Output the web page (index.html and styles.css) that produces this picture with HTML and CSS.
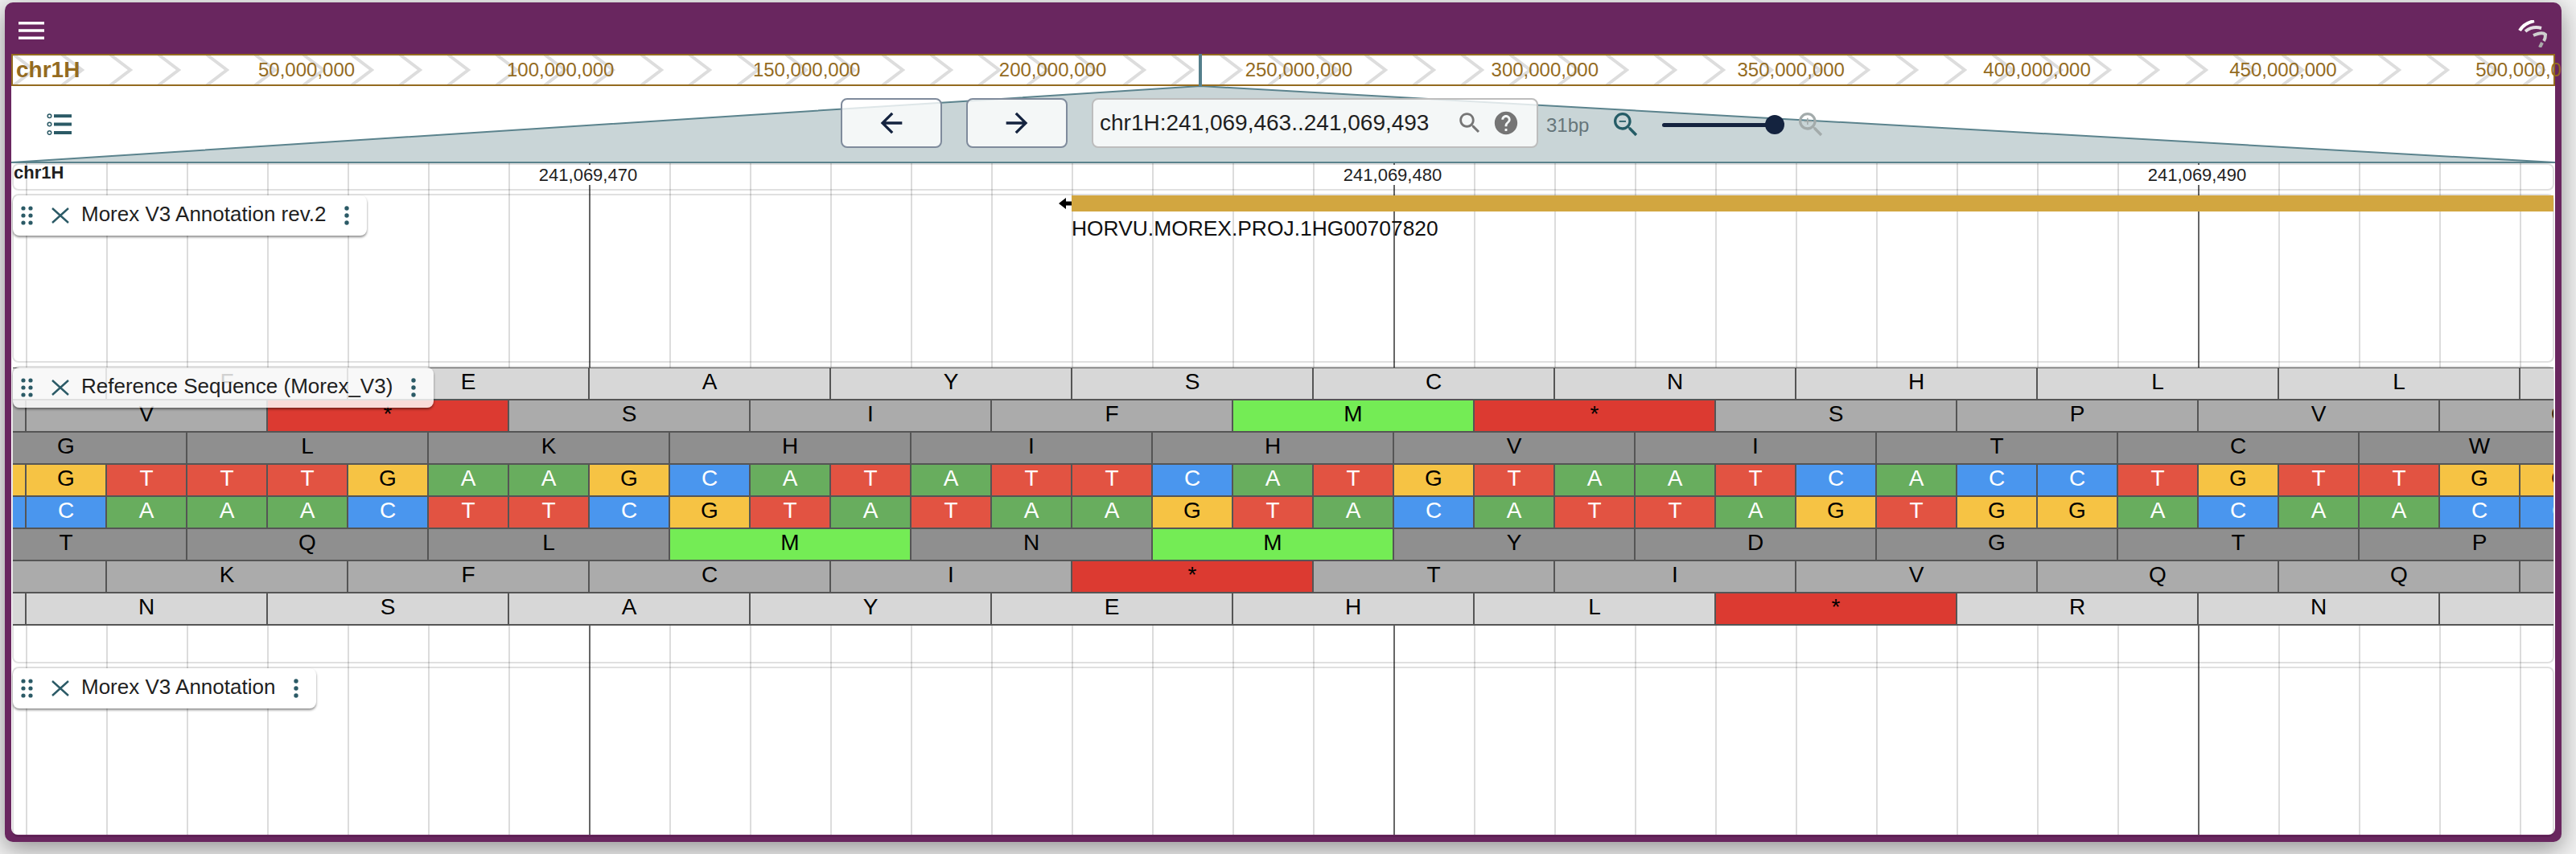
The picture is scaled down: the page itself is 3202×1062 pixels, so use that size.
FILE: index.html
```html
<!DOCTYPE html>
<html lang="en">

<head>
    <meta charset="UTF-8">
    <title>JBrowse - Morex V3</title>
    <link rel="stylesheet" href="styles.css">
</head>

<body>

    <div class="window">
        <div class="topbar">
            <svg class="menu-icon" width="32" height="22" viewBox="0 0 32 22"><path d="M0 0h32v3.4H0zM0 9.300h32v3.400H0zM0 18.600h32V22H0z" /></svg>
            <svg class="logo" width="36" height="34" viewBox="0 0 36 34" fill="none" stroke-linecap="butt">
                <path d="M2 13Q7 4 20 1" stroke="#fff" stroke-width="4" />
                <path d="M9 14Q18 7 29 10" stroke="#e4dfe4" stroke-width="4" />
                <path d="M19 19Q30 14 34 18Q34 23 32 26" stroke="#cfcfcf" stroke-width="4" />
                <path d="M27 34L30 28" stroke="#aaa" stroke-width="4" />
            </svg>
        </div>

        <div class="content">
            <!-- overview -->
            <div class="overview">
                <svg class="chevrons" width="3158" height="36">
                    <defs>
                        <pattern id="chev" width="60" height="36" x="59" patternUnits="userSpaceOnUse">
                            <path d="M2 -1L27 18L2 37" fill="none" stroke="#ddd" stroke-width="4" />
                        </pattern>
                    </defs>
                    <rect width="3158" height="36" fill="url(#chev)" />
                </svg>
                <span class="ov-name">chr1H</span>
                <span class="ov-tick ov-first">50,000,000</span>
                <span class="ov-tick">100,000,000</span>
                <span class="ov-tick">150,000,000</span>
                <span class="ov-tick">200,000,000</span>
                <span class="ov-tick">250,000,000</span>
                <span class="ov-tick">300,000,000</span>
                <span class="ov-tick">350,000,000</span>
                <span class="ov-tick">400,000,000</span>
                <span class="ov-tick">450,000,000</span>
                <span class="ov-tick">500,000,000</span>
                <div class="ov-marker"></div>
            </div>

            <!-- toolbar -->
            <div class="toolbar">
                <svg class="zoom-shape" width="3162" height="96" viewBox="0 0 3162 96">
                    <polygon points="0,95 1478,0 3162,95" fill="#c9d5d7" stroke="#5b838d" stroke-width="2" />
                </svg>
                <svg class="list-icon" width="31" height="27" viewBox="0 0 31 27" fill="#2b5a66">
                    <circle cx="3.500" cy="3.200" r="2.300" fill="none" stroke="#2b5a66" stroke-width="1.500" />
                    <circle cx="3.500" cy="13.500" r="2.300" fill="none" stroke="#2b5a66" stroke-width="1.500" />
                    <circle cx="3.500" cy="24" r="2.300" fill="none" stroke="#2b5a66" stroke-width="1.500" />
                    <rect x="9" y="1.200" width="22" height="4" />
                    <rect x="9" y="11.500" width="22" height="4" />
                    <rect x="9" y="22" width="22" height="4" />
                </svg>
                <div class="nav-btn nav-first">
                    <svg width="40" height="40" viewBox="0 0 24 24"><path d="M20 11H7.830l5.590-5.590L12 4l-8 8 8 8 1.410-1.410L7.830 13H20v-2z" /></svg>
                </div>
                <div class="nav-btn">
                    <svg width="40" height="40" viewBox="0 0 24 24"><path d="M12 4l-1.410 1.410L16.170 11H4v2h12.170l-5.580 5.590L12 20l8-8z" /></svg>
                </div>
                <div class="search-box">
                    <span class="search-text">chr1H:241,069,463..241,069,493</span>
                    <svg class="search-icon" width="34" height="34" viewBox="0 0 24 24"><path d="M15.500 14h-.79l-.28-.27C15.410 12.590 16 11.110 16 9.500 16 5.910 13.090 3 9.500 3S3 5.910 3 9.500 5.910 16 9.500 16c1.610 0 3.090-.59 4.230-1.570l.27.28v.79l5 4.990L20.490 19l-4.990-5zm-6 0C7.010 14 5 11.990 5 9.500S7.010 5 9.500 5 14 7.010 14 9.500 11.990 14 9.500 14z" /></svg>
                    <svg class="help-icon" width="34" height="34" viewBox="0 0 24 24"><path d="M12 2C6.480 2 2 6.480 2 12s4.480 10 10 10 10-4.480 10-10S17.520 2 12 2zm1 17h-2v-2h2v2zm2.070-7.750l-.9.920C13.450 12.900 13 13.500 13 15h-2v-.5c0-1.100.45-2.100 1.170-2.830l1.240-1.260c.37-.36.59-.86.59-1.410 0-1.100-.9-2-2-2s-2 .9-2 2H8c0-2.210 1.790-4 4-4s4 1.790 4 4c0 .88-.36 1.680-.93 2.250z" /></svg>
                </div>
                <span class="bp-label">31bp</span>
                <svg class="zoom-out" width="40" height="40" viewBox="0 0 24 24"><path d="M15.500 14h-.79l-.28-.27C15.410 12.590 16 11.110 16 9.500 16 5.910 13.090 3 9.500 3S3 5.910 3 9.500 5.910 16 9.500 16c1.610 0 3.090-.59 4.230-1.570l.27.28v.79l5 4.990L20.490 19l-4.990-5zm-6 0C7.010 14 5 11.990 5 9.500S7.010 5 9.500 5 14 7.010 14 9.500 11.990 14 9.500 14zM7 9h5v1H7z" /></svg>
                <div class="slider"><div class="slider-line"></div><div class="slider-thumb"></div></div>
                <svg class="zoom-in" width="40" height="40" viewBox="0 0 24 24"><path d="M15.500 14h-.79l-.28-.27C15.410 12.590 16 11.110 16 9.500 16 5.910 13.090 3 9.500 3S3 5.910 3 9.500 5.910 16 9.500 16c1.610 0 3.090-.59 4.230-1.570l.27.28v.79l5 4.990L20.490 19l-4.990-5zm-6 0C7.010 14 5 11.990 5 9.500S7.010 5 9.500 5 14 7.010 14 9.500 11.990 14 9.500 14z" /><path d="M12 10h-2v2H9v-2H7V9h2V7h1v2h3v1z" /></svg>
            </div>

            <!-- tracks -->
            <div class="tracks">
                <div class="scalebar">
                    <div class="scale-name">chr1H</div>
                    <div class="scale-cell"><span>241,069,470</span></div>
                    <div class="scale-cell"><span>241,069,480</span></div>
                    <div class="scale-cell"><span>241,069,490</span></div>
                </div>

                <div class="track track-gene">
                    <div class="pill">
                        <svg class="drag" width="24" height="28" viewBox="0 0 24 28"><circle cx="8" cy="5" r="2.600" /><circle cx="17" cy="5" r="2.600" /><circle cx="8" cy="14" r="2.600" /><circle cx="17" cy="14" r="2.600" /><circle cx="8" cy="23" r="2.600" /><circle cx="17" cy="23" r="2.600" /></svg>
                        <svg class="close" width="24" height="24" viewBox="0 0 24 24"><path d="M2 3L22 21M22 3L2 21" /></svg>
                        <span class="pill-title">Morex V3 Annotation rev.2</span>
                        <svg class="kebab" width="24" height="28" viewBox="0 0 24 28"><circle cx="12" cy="5" r="2.700" /><circle cx="12" cy="14" r="2.700" /><circle cx="12" cy="23" r="2.700" /></svg>
                    </div>
                    <div class="gene">
                        <svg class="gene-arrow" width="16" height="14" viewBox="0 0 16 14"><path d="M0 7L9 0V4.500H16V9.500H9V14z" /></svg>
                        <div class="gene-bar"></div>
                    </div>
                    <div class="gene-name">HORVU.MOREX.PROJ.1HG00707820</div>
                </div>

                <div class="track track-seq">
                    <div class="sequence">
                        <div class="row row-b shade-1">
                            <span class="fr"></span><span class="fr">F</span><span class="fr">E</span><span class="fr">A</span><span class="fr">Y</span><span class="fr">S</span><span class="fr">C</span><span class="fr">N</span><span class="fr">H</span><span class="fr">L</span><span class="fr">L</span><span class="fr"></span>
                        </div>
                        <div class="row row-a shade-2">
                            <span class="fr"></span><span class="fr">V</span><span class="fr stop">*</span><span class="fr">S</span><span class="fr">I</span><span class="fr">F</span><span class="fr start">M</span><span class="fr stop">*</span><span class="fr">S</span><span class="fr">P</span><span class="fr">V</span><span class="fr">G</span>
                        </div>
                        <div class="row row-c shade-3">
                            <span class="fr">G</span><span class="fr">L</span><span class="fr">K</span><span class="fr">H</span><span class="fr">I</span><span class="fr">H</span><span class="fr">V</span><span class="fr">I</span><span class="fr">T</span><span class="fr">C</span><span class="fr">W</span>
                        </div>
                        <div class="row row-c">
                            <span class="bs g">G</span><span class="bs g">G</span><span class="bs t">T</span><span class="bs t">T</span><span class="bs t">T</span><span class="bs g">G</span><span class="bs a">A</span><span class="bs a">A</span><span class="bs g">G</span><span class="bs c">C</span><span class="bs a">A</span><span class="bs t">T</span><span class="bs a">A</span><span class="bs t">T</span><span class="bs t">T</span><span class="bs c">C</span><span class="bs a">A</span><span class="bs t">T</span><span class="bs g">G</span><span class="bs t">T</span><span class="bs a">A</span><span class="bs a">A</span><span class="bs t">T</span><span class="bs c">C</span><span class="bs a">A</span><span class="bs c">C</span><span class="bs c">C</span><span class="bs t">T</span><span class="bs g">G</span><span class="bs t">T</span><span class="bs t">T</span><span class="bs g">G</span><span class="bs g">G</span>
                        </div>
                        <div class="row row-c">
                            <span class="bs c">C</span><span class="bs c">C</span><span class="bs a">A</span><span class="bs a">A</span><span class="bs a">A</span><span class="bs c">C</span><span class="bs t">T</span><span class="bs t">T</span><span class="bs c">C</span><span class="bs g">G</span><span class="bs t">T</span><span class="bs a">A</span><span class="bs t">T</span><span class="bs a">A</span><span class="bs a">A</span><span class="bs g">G</span><span class="bs t">T</span><span class="bs a">A</span><span class="bs c">C</span><span class="bs a">A</span><span class="bs t">T</span><span class="bs t">T</span><span class="bs a">A</span><span class="bs g">G</span><span class="bs t">T</span><span class="bs g">G</span><span class="bs g">G</span><span class="bs a">A</span><span class="bs c">C</span><span class="bs a">A</span><span class="bs a">A</span><span class="bs c">C</span><span class="bs c">C</span>
                        </div>
                        <div class="row row-c shade-3">
                            <span class="fr">T</span><span class="fr">Q</span><span class="fr">L</span><span class="fr start">M</span><span class="fr">N</span><span class="fr start">M</span><span class="fr">Y</span><span class="fr">D</span><span class="fr">G</span><span class="fr">T</span><span class="fr">P</span>
                        </div>
                        <div class="row row-b shade-2">
                            <span class="fr"></span><span class="fr">K</span><span class="fr">F</span><span class="fr">C</span><span class="fr">I</span><span class="fr stop">*</span><span class="fr">T</span><span class="fr">I</span><span class="fr">V</span><span class="fr">Q</span><span class="fr">Q</span><span class="fr"></span>
                        </div>
                        <div class="row row-a shade-1">
                            <span class="fr"></span><span class="fr">N</span><span class="fr">S</span><span class="fr">A</span><span class="fr">Y</span><span class="fr">E</span><span class="fr">H</span><span class="fr">L</span><span class="fr stop">*</span><span class="fr">R</span><span class="fr">N</span><span class="fr"></span>
                        </div>
                    </div>
                    <div class="pill pill-glass">
                        <svg class="drag" width="24" height="28" viewBox="0 0 24 28"><circle cx="8" cy="5" r="2.600" /><circle cx="17" cy="5" r="2.600" /><circle cx="8" cy="14" r="2.600" /><circle cx="17" cy="14" r="2.600" /><circle cx="8" cy="23" r="2.600" /><circle cx="17" cy="23" r="2.600" /></svg>
                        <svg class="close" width="24" height="24" viewBox="0 0 24 24"><path d="M2 3L22 21M22 3L2 21" /></svg>
                        <span class="pill-title">Reference Sequence (Morex_V3)</span>
                        <svg class="kebab" width="24" height="28" viewBox="0 0 24 28"><circle cx="12" cy="5" r="2.700" /><circle cx="12" cy="14" r="2.700" /><circle cx="12" cy="23" r="2.700" /></svg>
                    </div>
                </div>

                <div class="track track-last">
                    <div class="pill">
                        <svg class="drag" width="24" height="28" viewBox="0 0 24 28"><circle cx="8" cy="5" r="2.600" /><circle cx="17" cy="5" r="2.600" /><circle cx="8" cy="14" r="2.600" /><circle cx="17" cy="14" r="2.600" /><circle cx="8" cy="23" r="2.600" /><circle cx="17" cy="23" r="2.600" /></svg>
                        <svg class="close" width="24" height="24" viewBox="0 0 24 24"><path d="M2 3L22 21M22 3L2 21" /></svg>
                        <span class="pill-title">Morex V3 Annotation</span>
                        <svg class="kebab" width="24" height="28" viewBox="0 0 24 28"><circle cx="12" cy="5" r="2.700" /><circle cx="12" cy="14" r="2.700" /><circle cx="12" cy="23" r="2.700" /></svg>
                    </div>
                </div>
            </div>
        </div>
    </div>

</body>

</html>
```

FILE: styles.css
```css
* {
    box-sizing: border-box;
}

html,
body {
    margin: 0;
    height: 1062px;
    overflow: hidden;
}

body {
    padding: 3px 0 0 6px;
    background-color: #f1f1f1;
    font-family: "Liberation Sans", Arial, sans-serif;
    color: #1f1f1f;
}

.window {
    width: 3178px;
    height: 1044px;
    background-color: #69265f;
    border-radius: 10px;
    box-shadow: 0 8px 30px rgba(0, 0, 0, 0.4);
    overflow: hidden;
}

/* top bar */
.topbar {
    height: 64px;
    display: flex;
    align-items: center;
    justify-content: space-between;
    padding: 0 18px 0 17px;
}

.menu-icon {
    fill: #fff;
    margin-top: 5px;
}

.logo {
    margin-top: 14px;
}

.content {
    width: 3162px;
    height: 971px;
    margin-left: 8px;
    background-color: #fff;
    border-radius: 0 0 8px 8px;
}

/* overview */
.overview {
    position: relative;
    height: 40px;
    display: flex;
    align-items: center;
    padding-left: 4px;
    border: 2px solid #946b1f;
    background-color: #fff;
    color: #946b1f;
    font-size: 24px;
    white-space: nowrap;
}

.chevrons {
    position: absolute;
    left: 0;
    top: 0;
}

.ov-name {
    position: relative;
    flex: 0 0 301px;
    font-size: 28px;
    font-weight: bold;
}

.ov-tick {
    position: relative;
    flex: 0 0 305.9px;
}

.ov-first {
    flex-basis: 309px;
}

.ov-marker {
    position: absolute;
    left: 1474px;
    top: -2px;
    width: 4px;
    height: 40px;
    background-color: #547f8b;
}

/* toolbar */
.toolbar {
    position: relative;
    height: 96px;
    display: flex;
    align-items: center;
    padding: 0 0 4px 44px;
}

.toolbar > * {
    position: relative;
    flex: none;
}

.toolbar > .zoom-shape {
    position: absolute;
    left: 0;
    top: 0;
}

.list-icon {
    margin-top: 3px;
}

.nav-btn {
    width: 126px;
    height: 62px;
    margin-left: 30px;
    display: flex;
    align-items: center;
    justify-content: center;
    background-color: rgba(255, 255, 255, 0.8);
    border: 2px solid #7f8b9c;
    border-radius: 8px;
    fill: #14233f;
}

.nav-first {
    margin-left: 956px;
}

.search-box {
    width: 555px;
    height: 62px;
    margin-left: 30px;
    display: flex;
    align-items: center;
    padding: 0 21px 0 8px;
    background-color: rgba(255, 255, 255, 0.8);
    border: 2px solid #bdbdbd;
    border-radius: 8px;
    font-size: 28px;
}

.search-text {
    margin-right: auto;
}

.search-icon,
.help-icon {
    fill: #757575;
}

.help-icon {
    margin-left: 11px;
}

.bp-label {
    margin: 6px 0 0 10px;
    font-size: 24px;
    color: #66757a;
}

.zoom-out {
    margin: 4px 0 0 26px;
    fill: #255c66;
}

.slider {
    width: 152px;
    height: 24px;
    margin: 4px 0 0 25px;
}

.slider-line {
    width: 140px;
    height: 5px;
    margin-top: 10px;
    background-color: #14233f;
    border-radius: 3px;
}

.slider-thumb {
    position: absolute;
    right: 0;
    top: 0;
    width: 24px;
    height: 24px;
    border-radius: 50%;
    background-color: #14233f;
}

.zoom-in {
    margin: 4px 0 0 13px;
    fill: #a3abab;
}

/* tracks, grid lines are drawn on the background */
.tracks {
    height: 835px;
    padding: 0 1px;
    display: flex;
    flex-direction: column;
    gap: 4px;
    background-image:
        linear-gradient(90deg, #666 2px, transparent 2px),
        linear-gradient(90deg, #dcdcdc 2px, transparent 2px);
    background-size: 1000px 100%, 100px 100%;
    background-position: 718px 0, 18px 0;
    border-radius: 0 0 8px 8px;
}

.scalebar,
.track {
    position: relative;
    flex: none;
    border: 2px solid rgba(0, 0, 0, 0.12);
    border-radius: 8px;
}

.scalebar {
    height: 34px;
    display: flex;
    white-space: nowrap;
}

.scale-name {
    flex: 0 0 215px;
    margin-left: -1px;
    padding-left: 1px;
    font-size: 22px;
    font-weight: bold;
    line-height: 20px;
}

.scale-cell {
    flex: 0 0 1000px;
    text-align: center;
    font-size: 22px;
    line-height: 25px;
    height: 25px;
}

.scale-cell span {
    display: inline-block;
    background-color: #fff;
}

.track-gene {
    height: 210px;
}

.track-seq {
    height: 370px;
}

.track-last {
    height: 212px;
}

/* track label */
.pill {
    position: absolute;
    left: -1px;
    top: 0;
    height: 50px;
    display: flex;
    align-items: center;
    padding: 0 13px 0 5px;
    background-color: #fff;
    border-radius: 8px;
    box-shadow: 0 2px 3px rgba(0, 0, 0, 0.45);
    font-size: 26px;
    white-space: nowrap;
}

.pill-glass {
    background-color: rgba(255, 255, 255, 0.82);
}

.drag,
.kebab {
    fill: #2b5a66;
}

.close {
    margin-left: 18px;
    fill: none;
    stroke: #2b5a66;
    stroke-width: 2.4;
}

.pill-title {
    margin: 0 14px;
    padding-bottom: 3px;
}

/* gene feature */
.gene {
    display: flex;
    align-items: center;
    height: 20px;
    margin: 0 -1px 0 1299px;
}

.gene-arrow {
    flex: none;
}

.gene-bar {
    flex: 1;
    height: 20px;
    background-color: #d2a640;
}

.gene-name {
    margin: 8px 0 0 1315px;
    font-size: 26.4px;
    line-height: 26px;
    color: #111;
}

/* sequence */
.sequence {
    margin: 0 -1px;
    border-top: 1px solid #555;
    overflow: hidden;
    font-size: 28px;
    line-height: 34px;
    color: #000;
}

.row {
    display: flex;
    height: 40px;
    text-align: center;
}

.row-a {
    margin-left: -283px;
}

.row-b {
    margin-left: -183px;
}

.row-c {
    margin-left: -83px;
}

.shade-1 {
    background-color: #d7d7d7;
}

.shade-2 {
    background-color: #ababab;
}

.shade-3 {
    background-color: #8f8f8f;
}

.fr,
.bs {
    flex: none;
    height: 40px;
    border-right: 2px solid #555;
    border-bottom: 2px solid #555;
}

.fr {
    width: 300px;
}

.bs {
    width: 100px;
    color: #fff;
}

.start {
    background-color: #74ec55;
}

.stop {
    background-color: #dc3a31;
}

.a {
    background-color: #68ad5e;
}

.c {
    background-color: #4a96ee;
}

.g {
    background-color: #f6c344;
    color: #000;
}

.t {
    background-color: #e25342;
}
```
